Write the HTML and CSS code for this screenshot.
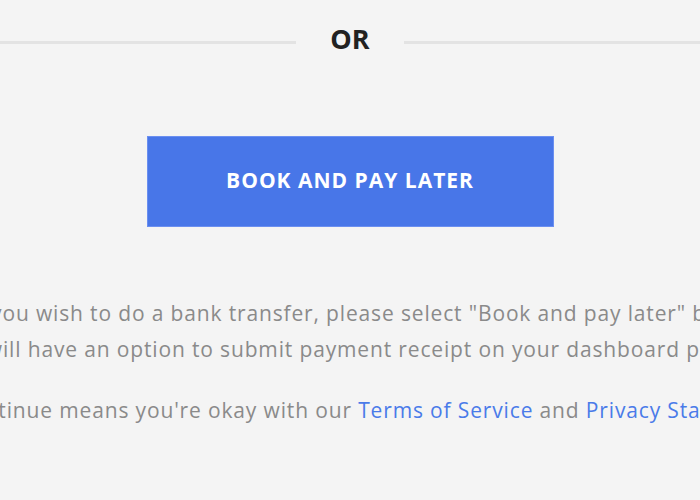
FILE: index.html
```html
<!DOCTYPE html>
<html lang="en">
<head>
    <meta charset="UTF-8">
    <meta name="viewport" content="width=device-width, initial-scale=1.0">
    <title>Checkout - Payment</title>
    <link rel="stylesheet" href="styles.css">
</head>
<body>
    <div class="page">
        <div class="divider">
            <span class="divider-line"></span>
            <span class="divider-text">OR</span>
            <span class="divider-line"></span>
        </div>

        <button class="pay-later">Book and pay later</button>

        <div class="notes">
            <p>If you wish to do a bank transfer, please select "Book and pay later" button,<br>you will have an option to submit payment receipt on your dashboard page later.</p>
            <p>Continue means you're okay with our <a href="#">Terms of Service</a> and <a href="#">Privacy Statement</a>.</p>
        </div>
    </div>
</body>
</html>
```

FILE: styles.css
```css
body {
    margin: 0;
    background: #f4f4f4;
    font-family: 'Open Sans', 'Liberation Sans', sans-serif;
    overflow: hidden;
}
.page {
    display: flex;
    flex-direction: column;
    align-items: center;
    padding-top: 25px;
}
.divider {
    display: flex;
    align-items: flex-start;
    width: 100%;
}
.divider-line {
    flex: 1;
    height: 3px;
    margin-top: 16px;
    background: #e3e3e3;
}
.divider-text {
    padding: 0 34px;
    font-size: 27px;
    font-weight: 700;
    line-height: 1;
    color: #222;
}
.pay-later {
    margin-top: 84px;
    width: 407px;
    height: 91px;
    padding-bottom: 4px;
    background: #4876e8;
    border: 1px solid #6b8ff0;
    color: #fff;
    font-family: inherit;
    font-size: 21px;
    font-weight: 700;
    text-transform: uppercase;
    letter-spacing: 1px;
    cursor: pointer;
}
.notes {
    flex-shrink: 0;
    width: 1000px;
    margin-top: 68px;
    padding-left: 40px;
    text-align: center;
    color: #8a8a8a;
    font-size: 21px;
    line-height: 36px;
    letter-spacing: 0.85px;
}
.notes p {
    margin: 0 0 25px;
}
.notes a {
    color: #4a7be9;
    text-decoration: none;
}
```
